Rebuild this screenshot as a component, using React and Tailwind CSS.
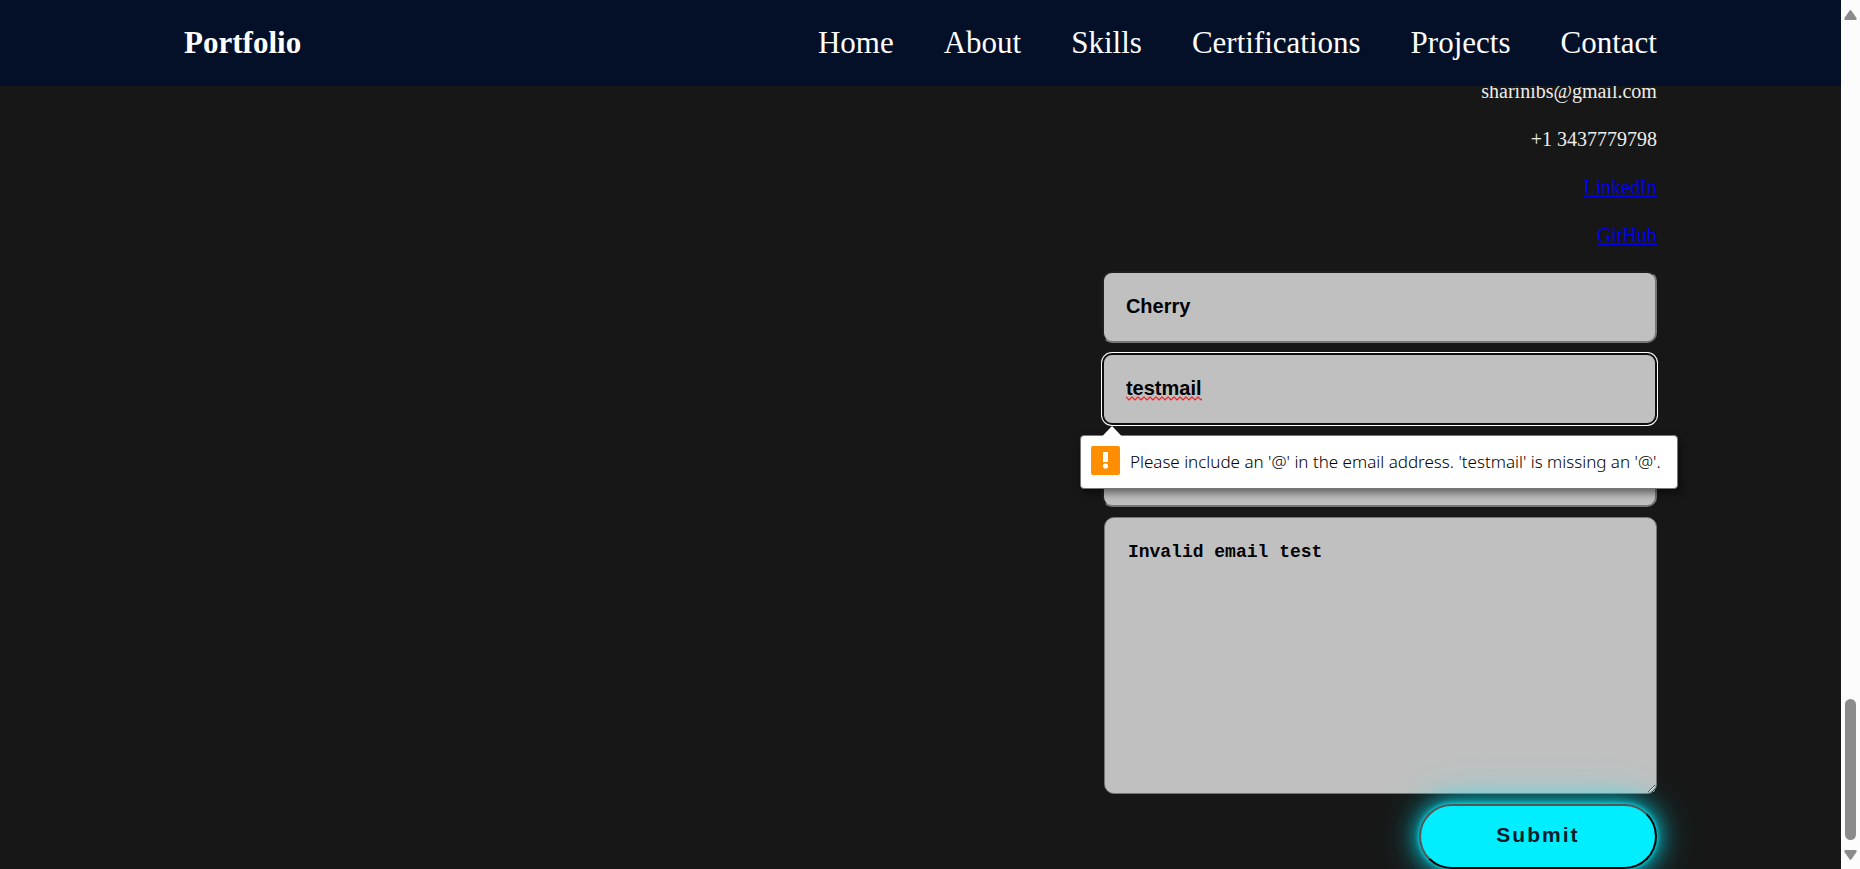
const links = ["Home", "About", "Skills", "Certifications", "Projects", "Contact"];

const fieldClass =
  "block h-[72px] w-full rounded-[10px] border-2 border-t-[#202020] border-l-[#202020] border-r-[#767676] border-b-[#767676] bg-[#c0c0c0] px-[22px] pb-0.5 font-['Liberation_Sans',Arial,sans-serif] text-xl font-semibold text-black outline-none";

function Header() {
  return (
    <header className="relative z-10 flex h-[86px] shrink-0 items-center justify-between bg-[#041027] px-[10%] text-[31px] leading-9 text-white">
      <a href="#home" className="font-bold">
        Portfolio
      </a>
      <nav className="flex gap-[50px]">
        {links.map((label) => (
          <a key={label} href={`#${label.toLowerCase()}`}>
            {label}
          </a>
        ))}
      </nav>
    </header>
  );
}

function Squiggle() {
  return (
    <svg
      className="pointer-events-none absolute top-[43px] left-6"
      width="76"
      height="5"
      aria-hidden="true"
    >
      <defs>
        <pattern id="wave" width="6" height="5" patternUnits="userSpaceOnUse">
          <path d="M-1 0 L0 1 L3 4 L6 1 L7 0" fill="none" stroke="#ff1a1a" strokeWidth="1.2" />
        </pattern>
      </defs>
      <rect width="76" height="5" fill="url(#wave)" />
    </svg>
  );
}

function ValidationBubble() {
  return (
    <div
      role="alert"
      className="absolute top-[82px] -left-[22px] z-20 flex h-[54px] min-w-[598px] items-center gap-[10px] rounded-[4px] border border-[#777] bg-white px-[10px] whitespace-nowrap text-black shadow-[2px_4px_8px_rgba(0,0,0,0.5)]"
    >
      <svg className="absolute -top-[11px] left-5" width="22" height="12" aria-hidden="true">
        <path d="M0.5 12 L11 1 L21.500 12Z" fill="#fff" />
      </svg>
      <svg className="-mt-1 shrink-0" width="29" height="29" viewBox="0 0 29 29" aria-hidden="true">
        <rect width="29" height="29" rx="2" fill="#ff8f00" />
        <rect x="12" y="6" width="5" height="10" fill="#fff" />
        <circle cx="14.500" cy="20" r="2.600" fill="#fff" />
      </svg>
      <span className="font-['Noto_Sans','Open_Sans',sans-serif] text-[17px] leading-6 font-light">
        Please include an '@' in the email address. 'testmail' is missing an '@'.
      </span>
    </div>
  );
}

function ContactForm() {
  return (
    <form
      noValidate
      onSubmit={(event) => event.preventDefault()}
      className="mt-6 flex w-[555px] max-w-full flex-col items-end gap-[10px]"
    >
      <input type="text" aria-label="Your name" defaultValue="Cherry" className={fieldClass} />
      <div className="relative w-full">
        <input
          type="email"
          aria-label="Your email"
          aria-invalid="true"
          spellCheck={false}
          defaultValue="testmail"
          className="block h-[72px] w-full rounded-[10px] border-2 border-[#101010] bg-[#c0c0c0] px-[22px] pb-0.5 font-['Liberation_Sans',Arial,sans-serif] text-xl font-semibold text-black ring-1 ring-white outline-none"
        />
        <Squiggle />
        <ValidationBubble />
      </div>
      <input type="text" aria-label="Subject" className={fieldClass} />
      <textarea
        aria-label="Your message"
        spellCheck={false}
        defaultValue="Invalid email test"
        className="block h-[277px] w-[553px] max-w-full resize rounded-[10px] border border-[#767676] bg-[#c0c0c0] px-[23px] py-[22px] font-['Liberation_Mono',Consolas,monospace] text-lg leading-6 font-semibold text-black outline-none"
      />
      <button
        type="submit"
        className="h-[65px] w-[238px] rounded-full border-2 border-t-[#555] border-l-[#555] border-r-black border-b-black bg-[#00eeff] pb-1 font-['Liberation_Sans',Arial,sans-serif] text-[21px] font-semibold tracking-[2px] text-[#081b29] shadow-[0_0_5px_#00eeff,0_0_25px_#00eeff,0_0_50px_#00eeff55]"
      >
        Submit
      </button>
    </form>
  );
}

function Scrollbar() {
  return (
    <div
      aria-hidden="true"
      className="flex w-[19px] shrink-0 flex-col items-center justify-between bg-[#fcfcfc] pt-[10px] pb-[9px]"
    >
      <svg width="13" height="10">
        <path d="M5.500 0.700 Q6.500 -0.500 7.500 0.700 L12.500 8 Q13 10 11.500 10 L1.500 10 Q0 10 0.500 8Z" fill="#8b8b8b" />
      </svg>
      <div className="flex flex-col items-center gap-[10px]">
        <div className="h-[141px] w-[11px] rounded-full bg-[#8b8b8b]" />
        <svg width="13" height="10">
          <path d="M5.500 9.300 Q6.500 10.500 7.500 9.300 L12.500 2 Q13 0 11.500 0 L1.500 0 Q0 0 0.500 2Z" fill="#8b8b8b" />
        </svg>
      </div>
    </div>
  );
}

export default function App() {
  return (
    <div className="flex h-screen overflow-hidden bg-[#171717] font-['Liberation_Serif','Times_New_Roman',serif]">
      <div className="flex min-w-0 flex-1 flex-col overflow-hidden">
        <Header />
        <main className="-mt-[7px] flex flex-col items-end px-[10%]">
          <address className="flex flex-col items-end gap-6 text-xl leading-6 text-[#ededed] not-italic">
            <p>sharinibs@gmail.com</p>
            <p>+1 3437779798</p>
            <a href="#linkedin" className="text-[#0000ee] underline">
              LinkedIn
            </a>
            <a href="#github" className="text-[#0000ee] underline">
              GitHub
            </a>
          </address>
          <ContactForm />
        </main>
      </div>
      <Scrollbar />
    </div>
  );
}
